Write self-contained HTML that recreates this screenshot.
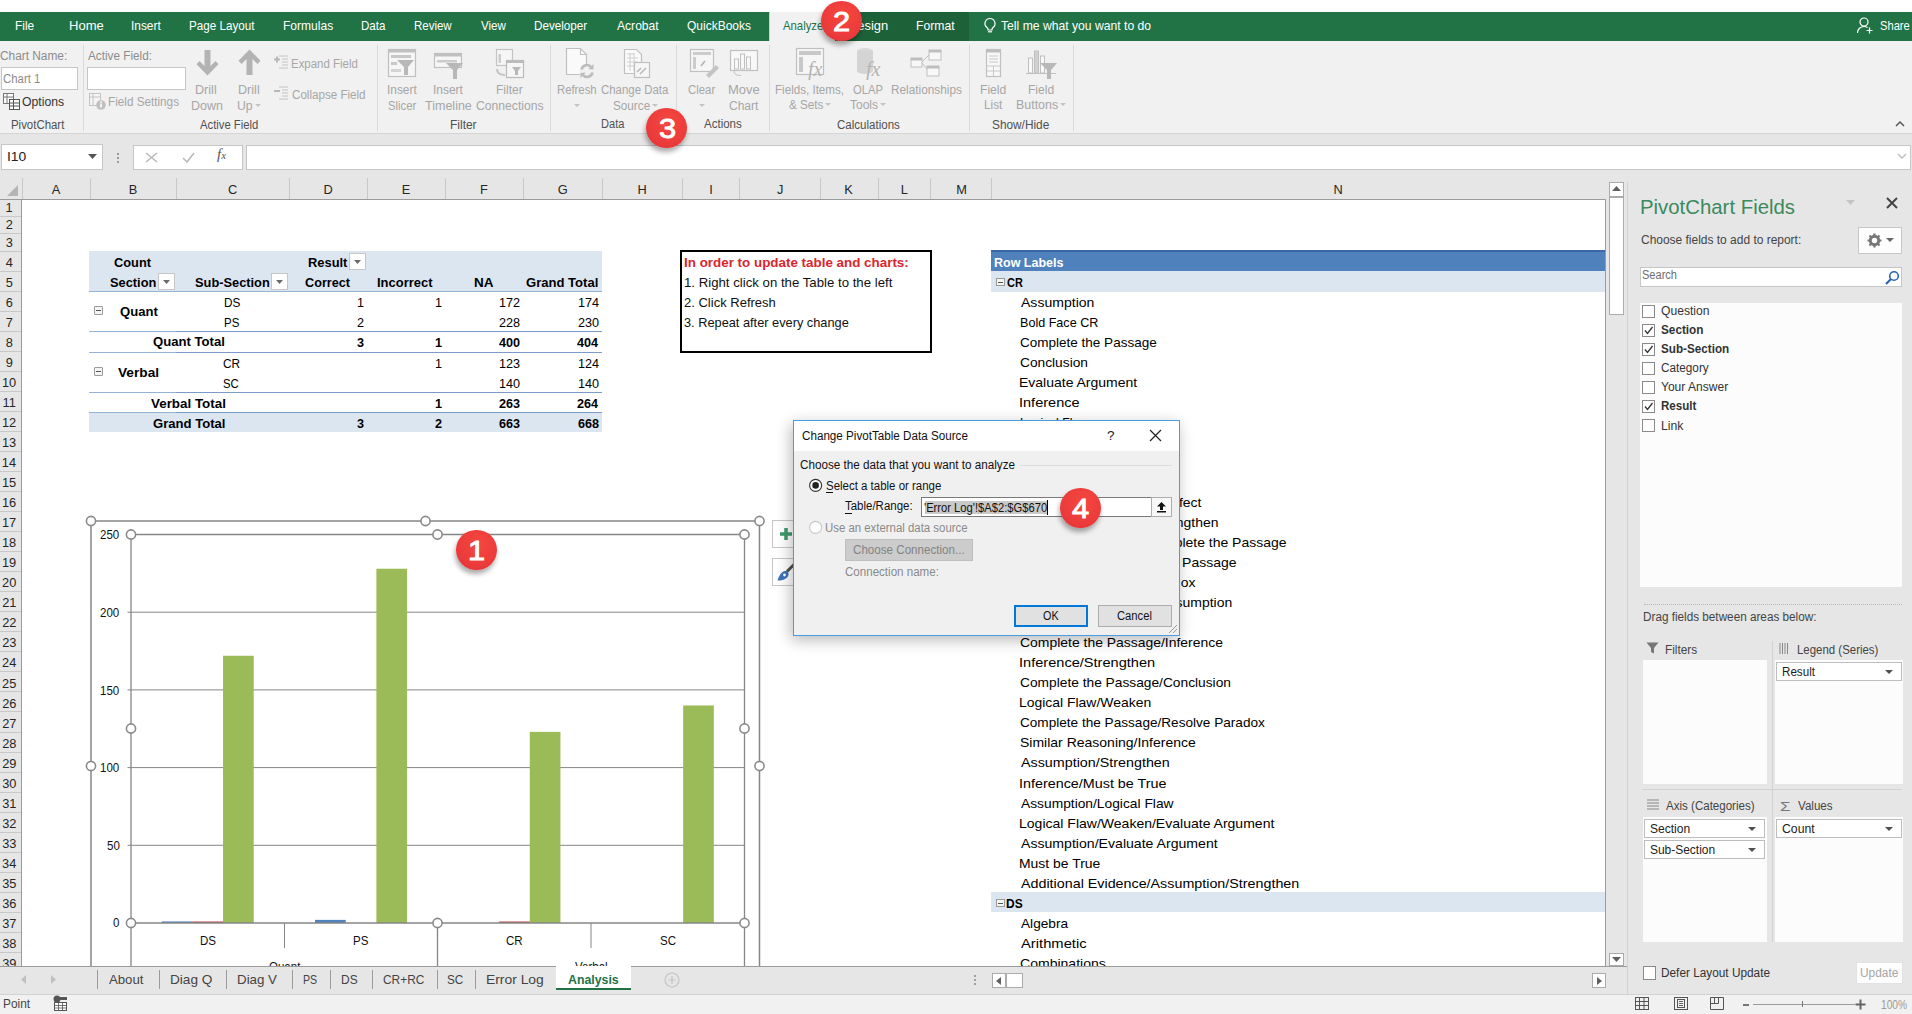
<!DOCTYPE html><html><head><meta charset="utf-8"><style>
html,body{margin:0;padding:0;background:#fff;}
#root{position:relative;width:1912px;height:1014px;overflow:hidden;background:#fff;font-family:"Liberation Sans",sans-serif;}
#root div{position:absolute;box-sizing:border-box;}
.t{position:absolute;white-space:nowrap;line-height:1;transform-origin:0 0;font-family:"Liberation Sans",sans-serif;}
</style></head><body><div id="root">
<div style="left:0.00px;top:12.00px;width:1912.00px;height:29.00px;background:#217346;"></div>
<div style="left:769.00px;top:12.00px;width:200.00px;height:29.00px;background:#1d6139;"></div>
<div style="left:769.00px;top:12.00px;width:66.00px;height:29.00px;background:#f1f1f1;border-left:1px solid #d0d0d0;"></div>
<div style="left:0.00px;top:41.00px;width:1912.00px;height:93.00px;background:#f1f1f1;border-bottom:1px solid #d5d5d5;"></div>
<div style="left:0.00px;top:134.00px;width:1912.00px;height:46.00px;background:#e6e6e6;"></div>
<div style="left:1.00px;top:144.00px;width:102.00px;height:26.00px;background:#fff;border:1px solid #c6c6c6;"></div>
<div style="left:133.00px;top:145.00px;width:110.00px;height:25.00px;background:#fff;border:1px solid #c6c6c6;"></div>
<div style="left:246.00px;top:145.00px;width:1665.00px;height:25.00px;background:#fff;border:1px solid #c6c6c6;"></div>
<div style="left:0.00px;top:180.00px;width:1605.00px;height:20.00px;background:#e6e6e6;border-bottom:1px solid #9b9b9b;"></div>
<div style="left:0.00px;top:200.00px;width:22.00px;height:766.00px;background:#e6e6e6;border-right:1px solid #9b9b9b;"></div>
<div style="left:22.00px;top:200.00px;width:1583.00px;height:766.00px;background:#fff;"></div>
<div style="left:1605.00px;top:180.00px;width:23.00px;height:786.00px;background:#e6e6e6;"></div>
<div style="left:1605.00px;top:199.00px;width:1.00px;height:767.00px;background:#9b9b9b;"></div>
<div style="left:1628.00px;top:170.00px;width:284.00px;height:824.00px;background:#e6e6e6;"></div>
<div style="left:1627.00px;top:182.00px;width:1.00px;height:812.00px;background:#d2d2d2;"></div>
<div style="left:0.00px;top:966.00px;width:1627.00px;height:28.00px;background:#e6e6e6;border-top:1px solid #9b9b9b;"></div>
<div style="left:0.00px;top:994.00px;width:1912.00px;height:20.00px;background:#f1f1f1;border-top:1px solid #d2d2d2;"></div>
<span class="t" style="left:15.26px;top:20.35px;font-size:12.7px;color:#ffffff;transform:scaleX(0.9368);">File</span>
<span class="t" style="left:68.97px;top:20.35px;font-size:12.7px;color:#ffffff;transform:scaleX(1.0286);">Home</span>
<span class="t" style="left:130.95px;top:20.35px;font-size:12.7px;color:#ffffff;transform:scaleX(0.9366);">Insert</span>
<span class="t" style="left:189.08px;top:20.35px;font-size:12.7px;color:#ffffff;transform:scaleX(0.9204);">Page Layout</span>
<span class="t" style="left:283.05px;top:20.35px;font-size:12.7px;color:#ffffff;transform:scaleX(0.9492);">Formulas</span>
<span class="t" style="left:361.09px;top:20.35px;font-size:12.7px;color:#ffffff;transform:scaleX(0.9115);">Data</span>
<span class="t" style="left:414.09px;top:20.35px;font-size:12.7px;color:#ffffff;transform:scaleX(0.9052);">Review</span>
<span class="t" style="left:480.89px;top:20.35px;font-size:12.7px;color:#ffffff;transform:scaleX(0.9132);">View</span>
<span class="t" style="left:534.48px;top:20.35px;font-size:12.7px;color:#ffffff;transform:scaleX(0.9196);">Developer</span>
<span class="t" style="left:617.00px;top:20.35px;font-size:12.7px;color:#ffffff;transform:scaleX(0.9527);">Acrobat</span>
<span class="t" style="left:687.21px;top:20.35px;font-size:12.7px;color:#ffffff;transform:scaleX(0.9450);">QuickBooks</span>
<span class="t" style="left:847.98px;top:20.35px;font-size:12.7px;color:#ffffff;transform:scaleX(1.0191);">Design</span>
<span class="t" style="left:916.24px;top:20.35px;font-size:12.7px;color:#ffffff;transform:scaleX(0.9600);">Format</span>
<span class="t" style="left:1001.16px;top:20.35px;font-size:12.7px;color:#ffffff;transform:scaleX(0.9590);">Tell me what you want to do</span>
<span class="t" style="left:1879.65px;top:20.35px;font-size:12.7px;color:#ffffff;transform:scaleX(0.8794);">Share</span>
<span class="t" style="left:782.50px;top:20.35px;font-size:12.7px;color:#217346;transform:scaleX(0.8939);">Analyze</span>
<svg style="position:absolute;left:982px;top:17px;" width="16" height="17" viewBox="0 0 16 17"><path d="M8 1.5a5 5 0 0 0-3 9c.6.5 1 1.2 1 2V13h4v-.5c0-.8.4-1.5 1-2a5 5 0 0 0-3-9z" fill="none" stroke="#fff" stroke-width="1.2"/><path d="M6 14.8h4" stroke="#fff" stroke-width="1.2"/></svg>
<svg style="position:absolute;left:1856px;top:16px;" width="18" height="18" viewBox="0 0 18 18"><circle cx="8" cy="6" r="4" fill="none" stroke="#fff" stroke-width="1.2"/><path d="M1.5 17c0-4 3-6.5 6.5-6.5 1.5 0 2.6.4 3.5 1" fill="none" stroke="#fff" stroke-width="1.2"/><path d="M13.5 11.5v6M10.5 14.5h6" stroke="#fff" stroke-width="1.2"/></svg>
<div style="left:82.50px;top:45.00px;width:1.00px;height:86.00px;background:#dadada;"></div>
<div style="left:376.50px;top:45.00px;width:1.00px;height:86.00px;background:#dadada;"></div>
<div style="left:550.30px;top:45.00px;width:1.00px;height:86.00px;background:#dadada;"></div>
<div style="left:676.30px;top:45.00px;width:1.00px;height:86.00px;background:#dadada;"></div>
<div style="left:769.30px;top:45.00px;width:1.00px;height:86.00px;background:#dadada;"></div>
<div style="left:968.50px;top:45.00px;width:1.00px;height:86.00px;background:#dadada;"></div>
<div style="left:1073.00px;top:45.00px;width:1.00px;height:86.00px;background:#dadada;"></div>
<span class="t" style="left:0.01px;top:49.92px;font-size:12.5px;color:#8c8c8c;transform:scaleX(0.9490);">Chart Name:</span>
<div style="left:1.00px;top:67.00px;width:77.00px;height:23.00px;background:#fff;border:1px solid #c6c6c6;"></div>
<span class="t" style="left:3.03px;top:72.72px;font-size:12.5px;color:#8c8c8c;transform:scaleX(0.9107);">Chart 1</span>
<svg style="position:absolute;left:3px;top:93px;" width="17" height="17" viewBox="0 0 17 17"><rect x="0.5" y="0.5" width="10" height="10" fill="#fff" stroke="#777"/><path d="M0.5 4h10M4 0.5v10" stroke="#777"/><rect x="6.5" y="6.5" width="10" height="10" fill="#fff" stroke="#555"/><path d="M6.5 10h10M10.5 6.5v10M6.5 13h10" stroke="#555"/></svg>
<span class="t" style="left:21.89px;top:95.62px;font-size:12.5px;color:#333333;transform:scaleX(0.9786);">Options</span>
<span class="t" style="left:11.39px;top:118.52px;font-size:12.5px;color:#505050;transform:scaleX(0.9135);">PivotChart</span>
<span class="t" style="left:87.50px;top:49.92px;font-size:12.5px;color:#8c8c8c;transform:scaleX(0.9403);">Active Field:</span>
<div style="left:87.00px;top:67.00px;width:99.00px;height:23.00px;background:#fff;border:1px solid #c6c6c6;"></div>
<svg style="position:absolute;left:89px;top:93px;" width="17" height="17" viewBox="0 0 17 17"><rect x="0.5" y="0.5" width="11" height="12" fill="#f4f4f4" stroke="#c4c4c4"/><path d="M0.5 4h11M4 0.5v12" stroke="#c4c4c4"/><circle cx="12" cy="12" r="4.8" fill="#c0c0c0"/><rect x="11.2" y="10.5" width="1.6" height="4" fill="#fff"/><rect x="11.2" y="8.3" width="1.6" height="1.5" fill="#fff"/></svg>
<span class="t" style="left:108.36px;top:95.62px;font-size:12.5px;color:#a6a6a6;transform:scaleX(0.9374);">Field Settings</span>
<svg style="position:absolute;left:196px;top:49px;" width="23" height="28" viewBox="0 0 23 28"><path d="M8.5 1h6v16l5-5 3 3.2L11.5 26.5 0.5 15.2 3.5 12l5 5z" fill="#b3b3b3"/></svg>
<svg style="position:absolute;left:238px;top:48px;" width="23" height="28" viewBox="0 0 23 28"><path d="M8.5 27h6V11l5 5 3-3.2L11.5 1.5 0.5 12.8 3.5 16l5-5z" fill="#b3b3b3"/></svg>
<span class="t" style="left:195.49px;top:83.62px;font-size:12.5px;color:#a6a6a6;transform:scaleX(1.0076);">Drill</span>
<span class="t" style="left:190.50px;top:99.62px;font-size:12.5px;color:#a6a6a6;transform:scaleX(0.9959);">Down</span>
<span class="t" style="left:237.59px;top:83.62px;font-size:12.5px;color:#a6a6a6;transform:scaleX(1.0076);">Drill</span>
<span class="t" style="left:236.52px;top:99.62px;font-size:12.5px;color:#a6a6a6;transform:scaleX(0.9793);">Up</span>
<svg style="position:absolute;left:273px;top:55px;" width="16" height="15" viewBox="0 0 16 15"><path d="M4 1.5v6M1 4.5h6" stroke="#b8b8b8" stroke-width="2"/><path d="M6 1h9M9 4h6M9 7h6M9 10h6M6 13h9" stroke="#c4c4c4" stroke-width="1"/></svg>
<svg style="position:absolute;left:273px;top:86px;" width="16" height="15" viewBox="0 0 16 15"><path d="M1 5h6" stroke="#b8b8b8" stroke-width="2"/><path d="M6 1h9M9 4h6M9 7h6M9 10h6M6 13h9" stroke="#c4c4c4" stroke-width="1"/></svg>
<span class="t" style="left:291.48px;top:57.72px;font-size:12.5px;color:#a6a6a6;transform:scaleX(0.9153);">Expand Field</span>
<span class="t" style="left:291.82px;top:88.62px;font-size:12.5px;color:#a6a6a6;transform:scaleX(0.9286);">Collapse Field</span>
<span class="t" style="left:200.40px;top:118.52px;font-size:12.5px;color:#505050;transform:scaleX(0.9020);">Active Field</span>
<svg style="position:absolute;left:387px;top:48px;" width="30" height="30" viewBox="0 0 30 30"><rect x="1.5" y="1.5" width="27" height="27" fill="#f6f6f6" stroke="#c0c0c0" stroke-width="1.2"/><rect x="1.5" y="1.5" width="27" height="3" fill="#c0c0c0"/><rect x="4" y="7" width="20" height="3" fill="#c8c8c8"/><path d="M10 12h17l-6 7v8h-4v-8z" fill="#b8b8b8"/><rect x="4" y="14" width="6" height="3" fill="#c8c8c8"/><rect x="4" y="21" width="10" height="3" fill="#d4d4d4"/></svg>
<svg style="position:absolute;left:433px;top:52px;" width="32" height="28" viewBox="0 0 32 28"><rect x="1.5" y="1.5" width="27" height="14" fill="#f6f6f6" stroke="#c0c0c0" stroke-width="1.2"/><rect x="1.5" y="1.5" width="27" height="3" fill="#c0c0c0"/><rect x="4" y="8" width="20" height="2.5" fill="#cccccc"/><path d="M13 11h17l-6 7v9h-4v-9z" fill="#b8b8b8"/></svg>
<svg style="position:absolute;left:495px;top:48px;" width="31" height="31" viewBox="0 0 31 31"><rect x="1.5" y="1.5" width="16" height="16" fill="#f6f6f6" stroke="#c4c4c4" stroke-width="1.2"/><rect x="3.5" y="6" width="2.5" height="9" fill="#cccccc"/><rect x="11.5" y="12.5" width="17" height="17" fill="#f6f6f6" stroke="#bbbbbb" stroke-width="1.2"/><rect x="11.5" y="12.5" width="17" height="2.5" fill="#bbb"/><path d="M17 19h9l-3 4v4h-3v-4z" fill="#b8b8b8"/><path d="M2 21c0 4 3 6 8 6" fill="none" stroke="#c4c4c4" stroke-width="2"/></svg>
<span class="t" style="left:386.53px;top:83.72px;font-size:12.5px;color:#a6a6a6;transform:scaleX(0.9500);">Insert</span>
<span class="t" style="left:387.83px;top:99.72px;font-size:12.5px;color:#a6a6a6;transform:scaleX(0.9049);">Slicer</span>
<span class="t" style="left:433.12px;top:83.72px;font-size:12.5px;color:#a6a6a6;transform:scaleX(0.9567);">Insert</span>
<span class="t" style="left:425.05px;top:99.72px;font-size:12.5px;color:#a6a6a6;">Timeline</span>
<span class="t" style="left:496.44px;top:83.72px;font-size:12.5px;color:#a6a6a6;transform:scaleX(0.9615);">Filter</span>
<span class="t" style="left:475.79px;top:99.72px;font-size:12.5px;color:#a6a6a6;transform:scaleX(0.9726);">Connections</span>
<span class="t" style="left:449.54px;top:118.52px;font-size:12.5px;color:#505050;transform:scaleX(0.9577);">Filter</span>
<svg style="position:absolute;left:565px;top:47px;" width="30" height="33" viewBox="0 0 30 33"><path d="M1.5 1.5h14l6 6V27.5h-20z" fill="#fafafa" stroke="#c0c0c0" stroke-width="1.2"/><path d="M15.5 1.5v6h6" fill="none" stroke="#c0c0c0" stroke-width="1.2"/><circle cx="22" cy="24" r="7.5" fill="#f1f1f1"/><path d="M16.5 22.5a5.5 5.5 0 0 1 9.8-2.3" fill="none" stroke="#bcbcbc" stroke-width="2.6"/><path d="M28.5 17v5.2h-5.2z" fill="#bcbcbc"/><path d="M27.5 25.5a5.5 5.5 0 0 1-9.8 2.3" fill="none" stroke="#bcbcbc" stroke-width="2.6"/><path d="M15.5 31v-5.2h5.2z" fill="#bcbcbc"/></svg>
<svg style="position:absolute;left:623px;top:48px;" width="30" height="32" viewBox="0 0 30 32"><path d="M1.5 1.5h12l5 5V25.5h-17z" fill="#fafafa" stroke="#c0c0c0" stroke-width="1.2"/><path d="M4 6h8M4 10h11M4 14h11M4 18h11M7 5v18M11 5v18" stroke="#d0d0d0"/><rect x="11.5" y="14.5" width="15" height="15" fill="#f6f6f6" stroke="#c0c0c0" stroke-width="1.2"/><path d="M14 24l4-4M17 26l6-6" stroke="#b8b8b8" stroke-width="1.5"/></svg>
<span class="t" style="left:556.60px;top:83.52px;font-size:12.5px;color:#a6a6a6;transform:scaleX(0.9048);">Refresh</span>
<span class="t" style="left:601.13px;top:83.52px;font-size:12.5px;color:#a6a6a6;transform:scaleX(0.9135);">Change Data</span>
<span class="t" style="left:612.61px;top:99.52px;font-size:12.5px;color:#a6a6a6;transform:scaleX(0.9381);">Source</span>
<span class="t" style="left:600.81px;top:118.42px;font-size:12.5px;color:#505050;transform:scaleX(0.8863);">Data</span>
<svg style="position:absolute;left:689px;top:48px;" width="31" height="31" viewBox="0 0 31 31"><rect x="1.5" y="1.5" width="23" height="22" fill="#f6f6f6" stroke="#c0c0c0" stroke-width="1.2"/><rect x="4" y="4" width="18" height="3" fill="#cccccc"/><rect x="4" y="9" width="3" height="12" fill="#cccccc"/><path d="M12 18l4-5" stroke="#b0b0b0" stroke-width="1.5"/><path d="M17 27l10-10 3 3-10 10z" fill="#c4c4c4"/></svg>
<svg style="position:absolute;left:729px;top:49px;" width="30" height="28" viewBox="0 0 30 28"><rect x="1.5" y="1.5" width="27" height="20" fill="#f8f8f8" stroke="#c0c0c0" stroke-width="1.2"/><rect x="5.5" y="10" width="4" height="10" fill="#f8f8f8" stroke="#c0c0c0"/><rect x="11.5" y="5" width="4" height="15" fill="#f8f8f8" stroke="#c0c0c0"/><rect x="17.5" y="8" width="4" height="12" fill="#f8f8f8" stroke="#c0c0c0"/><path d="M5 21.5c0 4 3 5 7 5" fill="none" stroke="#c0c0c0"/></svg>
<span class="t" style="left:687.73px;top:83.52px;font-size:12.5px;color:#a6a6a6;transform:scaleX(0.9099);">Clear</span>
<span class="t" style="left:728.16px;top:83.52px;font-size:12.5px;color:#a6a6a6;transform:scaleX(1.0379);">Move</span>
<span class="t" style="left:728.60px;top:99.52px;font-size:12.5px;color:#a6a6a6;transform:scaleX(0.9607);">Chart</span>
<span class="t" style="left:704.00px;top:118.42px;font-size:12.5px;color:#505050;transform:scaleX(0.9210);">Actions</span>
<svg style="position:absolute;left:795px;top:47px;" width="33" height="33" viewBox="0 0 33 33"><rect x="1.5" y="1.5" width="27" height="26" fill="#f6f6f6" stroke="#c0c0c0" stroke-width="1.2"/><rect x="4" y="4" width="22" height="4" fill="#c8c8c8"/><rect x="4" y="10" width="4" height="15" fill="#c8c8c8"/><text x="13" y="29" font-family="Liberation Serif" font-style="italic" font-size="20" fill="#b4b4b4">fx</text></svg>
<svg style="position:absolute;left:855px;top:47px;" width="30" height="33" viewBox="0 0 30 33"><ellipse cx="10" cy="4" rx="8" ry="3" fill="#d8d8d8"/><rect x="2" y="4" width="16" height="20" fill="#d4d4d4"/><ellipse cx="10" cy="24" rx="8" ry="3" fill="#d4d4d4"/><text x="11" y="29" font-family="Liberation Serif" font-style="italic" font-size="20" fill="#b4b4b4">fx</text></svg>
<svg style="position:absolute;left:910px;top:49px;" width="32" height="29" viewBox="0 0 32 29"><rect x="1" y="9" width="11" height="9" fill="#f8f8f8" stroke="#c0c0c0"/><rect x="1" y="9" width="11" height="2.5" fill="#bdbdbd"/><rect x="19" y="1" width="12" height="10" fill="#f8f8f8" stroke="#c0c0c0"/><rect x="19" y="1" width="12" height="2.5" fill="#bdbdbd"/><rect x="17" y="17" width="12" height="10" fill="#f8f8f8" stroke="#c0c0c0"/><rect x="17" y="17" width="12" height="2.5" fill="#bdbdbd"/><path d="M12 13l7-7M12 14l5 6" stroke="#c0c0c0"/></svg>
<span class="t" style="left:775.27px;top:83.52px;font-size:12.5px;color:#a6a6a6;transform:scaleX(0.9287);">Fields, Items,</span>
<span class="t" style="left:789.05px;top:99.22px;font-size:12.5px;color:#a6a6a6;transform:scaleX(0.9333);">&amp; Sets</span>
<span class="t" style="left:852.94px;top:83.52px;font-size:12.5px;color:#a6a6a6;transform:scaleX(0.8965);">OLAP</span>
<span class="t" style="left:850.46px;top:99.22px;font-size:12.5px;color:#a6a6a6;transform:scaleX(0.9586);">Tools</span>
<span class="t" style="left:890.55px;top:83.52px;font-size:12.5px;color:#a6a6a6;transform:scaleX(0.9456);">Relationships</span>
<span class="t" style="left:836.92px;top:119.02px;font-size:12.5px;color:#505050;transform:scaleX(0.9224);">Calculations</span>
<svg style="position:absolute;left:985px;top:48px;" width="17" height="30" viewBox="0 0 17 30"><rect x="1.5" y="1.5" width="14" height="27" fill="#f8f8f8" stroke="#c0c0c0" stroke-width="1.2"/><rect x="1.5" y="1.5" width="14" height="3" fill="#bdbdbd"/><path d="M4 8h9M4 11h9M4 14h9M1.5 18h14M1.5 23h14M8.5 18v10" stroke="#c8c8c8"/></svg>
<svg style="position:absolute;left:1026px;top:50px;" width="33" height="31" viewBox="0 0 33 31"><rect x="2.5" y="8" width="4" height="15" fill="#f8f8f8" stroke="#c0c0c0"/><rect x="8.5" y="1" width="4" height="22" fill="#d0d0d0" stroke="#c0c0c0"/><rect x="14.5" y="6" width="4" height="17" fill="#f8f8f8" stroke="#c0c0c0"/><path d="M0 23.5h30" stroke="#c0c0c0"/><path d="M14 13h17l-6 7v9h-4v-9z" fill="#b8b8b8"/></svg>
<span class="t" style="left:980.03px;top:83.52px;font-size:12.5px;color:#a6a6a6;transform:scaleX(0.9703);">Field</span>
<span class="t" style="left:984.46px;top:99.22px;font-size:12.5px;color:#a6a6a6;transform:scaleX(0.9415);">List</span>
<span class="t" style="left:1028.04px;top:83.52px;font-size:12.5px;color:#a6a6a6;transform:scaleX(0.9624);">Field</span>
<span class="t" style="left:1016.41px;top:99.22px;font-size:12.5px;color:#a6a6a6;transform:scaleX(0.9933);">Buttons</span>
<span class="t" style="left:991.71px;top:119.02px;font-size:12.5px;color:#505050;transform:scaleX(0.9468);">Show/Hide</span>
<svg style="position:absolute;left:254.5px;top:103.7px;" width="7" height="4" viewBox="0 0 7 4"><path d="M0 0h6l-3 3z" fill="#c4c4c4"/></svg>
<svg style="position:absolute;left:573.5px;top:103.6px;" width="7" height="4" viewBox="0 0 7 4"><path d="M0 0h6l-3 3z" fill="#c4c4c4"/></svg>
<svg style="position:absolute;left:651.7px;top:103.5px;" width="7" height="4" viewBox="0 0 7 4"><path d="M0 0h6l-3 3z" fill="#c4c4c4"/></svg>
<svg style="position:absolute;left:698.6px;top:103.6px;" width="7" height="4" viewBox="0 0 7 4"><path d="M0 0h6l-3 3z" fill="#c4c4c4"/></svg>
<svg style="position:absolute;left:825.4px;top:103.2px;" width="7" height="4" viewBox="0 0 7 4"><path d="M0 0h6l-3 3z" fill="#c4c4c4"/></svg>
<svg style="position:absolute;left:880.3px;top:103.2px;" width="7" height="4" viewBox="0 0 7 4"><path d="M0 0h6l-3 3z" fill="#c4c4c4"/></svg>
<svg style="position:absolute;left:1060px;top:103.2px;" width="7" height="4" viewBox="0 0 7 4"><path d="M0 0h6l-3 3z" fill="#c4c4c4"/></svg>
<svg style="position:absolute;left:1895px;top:120px;" width="10" height="7" viewBox="0 0 10 7"><path d="M1 6l4-4 4 4" fill="none" stroke="#555" stroke-width="1.5"/></svg>
<span class="t" style="left:7.08px;top:151.46px;font-size:12.8px;color:#222;transform:scaleX(1.0853);">I10</span>
<svg style="position:absolute;left:88px;top:154px;" width="9" height="5" viewBox="0 0 9 5"><path d="M0 0h9l-4.5 5z" fill="#555"/></svg>
<div style="left:117.00px;top:153.00px;width:2.00px;height:2.00px;background:#9a9a9a;"></div>
<div style="left:117.00px;top:157.00px;width:2.00px;height:2.00px;background:#9a9a9a;"></div>
<div style="left:117.00px;top:161.00px;width:2.00px;height:2.00px;background:#9a9a9a;"></div>
<svg style="position:absolute;left:145px;top:152px;" width="13" height="11" viewBox="0 0 13 11"><path d="M1 1l11 9M12 1L1 10" stroke="#b8b8b8" stroke-width="1.5"/></svg>
<svg style="position:absolute;left:182px;top:152px;" width="13" height="11" viewBox="0 0 13 11"><path d="M1 6l4 4 7-9" fill="none" stroke="#b8b8b8" stroke-width="1.5"/></svg>
<span class="t" style="left:217px;top:147px;font-size:15px;font-family:'Liberation Serif',serif;font-style:italic;color:#555;">f<span style="font-size:11px">x</span></span>
<svg style="position:absolute;left:1897px;top:153px;" width="10" height="7" viewBox="0 0 10 7"><path d="M1 1l4 4 4-4" fill="none" stroke="#c0c0c0" stroke-width="1.5"/></svg>
<div style="left:0;top:0;width:1912px;height:966px;overflow:hidden;">
<span class="t" style="left:51.80px;top:183.56px;font-size:12.8px;color:#262626;">A</span>
<span class="t" style="left:128.71px;top:183.56px;font-size:12.8px;color:#262626;">B</span>
<span class="t" style="left:228.01px;top:183.56px;font-size:12.8px;color:#262626;">C</span>
<span class="t" style="left:323.54px;top:183.56px;font-size:12.8px;color:#262626;">D</span>
<span class="t" style="left:401.85px;top:183.56px;font-size:12.8px;color:#262626;">E</span>
<span class="t" style="left:480.08px;top:183.56px;font-size:12.8px;color:#262626;">F</span>
<span class="t" style="left:557.84px;top:183.56px;font-size:12.8px;color:#262626;">G</span>
<span class="t" style="left:637.59px;top:183.56px;font-size:12.8px;color:#262626;">H</span>
<span class="t" style="left:709.25px;top:183.56px;font-size:12.8px;color:#262626;">I</span>
<span class="t" style="left:777.02px;top:183.56px;font-size:12.8px;color:#262626;">J</span>
<span class="t" style="left:844.31px;top:183.56px;font-size:12.8px;color:#262626;">K</span>
<span class="t" style="left:900.69px;top:183.56px;font-size:12.8px;color:#262626;">L</span>
<span class="t" style="left:956.14px;top:183.56px;font-size:12.8px;color:#262626;">M</span>
<span class="t" style="left:1333.44px;top:183.56px;font-size:12.8px;color:#262626;">N</span>
<div style="left:22.00px;top:178.00px;width:1.00px;height:21.00px;background:#c8c8c8;"></div>
<div style="left:90.00px;top:178.00px;width:1.00px;height:21.00px;background:#c8c8c8;"></div>
<div style="left:176.00px;top:178.00px;width:1.00px;height:21.00px;background:#c8c8c8;"></div>
<div style="left:289.00px;top:178.00px;width:1.00px;height:21.00px;background:#c8c8c8;"></div>
<div style="left:367.00px;top:178.00px;width:1.00px;height:21.00px;background:#c8c8c8;"></div>
<div style="left:445.00px;top:178.00px;width:1.00px;height:21.00px;background:#c8c8c8;"></div>
<div style="left:523.00px;top:178.00px;width:1.00px;height:21.00px;background:#c8c8c8;"></div>
<div style="left:602.00px;top:178.00px;width:1.00px;height:21.00px;background:#c8c8c8;"></div>
<div style="left:682.00px;top:178.00px;width:1.00px;height:21.00px;background:#c8c8c8;"></div>
<div style="left:739.00px;top:178.00px;width:1.00px;height:21.00px;background:#c8c8c8;"></div>
<div style="left:820.00px;top:178.00px;width:1.00px;height:21.00px;background:#c8c8c8;"></div>
<div style="left:878.00px;top:178.00px;width:1.00px;height:21.00px;background:#c8c8c8;"></div>
<div style="left:930.00px;top:178.00px;width:1.00px;height:21.00px;background:#c8c8c8;"></div>
<div style="left:991.00px;top:178.00px;width:1.00px;height:21.00px;background:#c8c8c8;"></div>
<svg style="position:absolute;left:5px;top:184px;" width="14" height="13" viewBox="0 0 14 13"><path d="M13 1v11H2z" fill="#b4b4b4"/></svg>
<div style="left:0.00px;top:216.00px;width:21.00px;height:1.00px;background:#c8c8c8;"></div>
<span class="t" style="left:5.55px;top:202.06px;font-size:12.8px;color:#262626;">1</span>
<div style="left:0.00px;top:233.00px;width:21.00px;height:1.00px;background:#c8c8c8;"></div>
<span class="t" style="left:5.74px;top:219.06px;font-size:12.8px;color:#262626;">2</span>
<div style="left:0.00px;top:251.00px;width:21.00px;height:1.00px;background:#c8c8c8;"></div>
<span class="t" style="left:5.80px;top:236.86px;font-size:12.8px;color:#262626;">3</span>
<div style="left:0.00px;top:271.00px;width:21.00px;height:1.00px;background:#c8c8c8;"></div>
<span class="t" style="left:5.80px;top:256.89px;font-size:12.8px;color:#262626;">4</span>
<div style="left:0.00px;top:291.00px;width:21.00px;height:1.00px;background:#c8c8c8;"></div>
<span class="t" style="left:5.74px;top:276.92px;font-size:12.8px;color:#262626;">5</span>
<div style="left:0.00px;top:311.00px;width:21.00px;height:1.00px;background:#c8c8c8;"></div>
<span class="t" style="left:5.74px;top:296.95px;font-size:12.8px;color:#262626;">6</span>
<div style="left:0.00px;top:331.00px;width:21.00px;height:1.00px;background:#c8c8c8;"></div>
<span class="t" style="left:5.74px;top:316.98px;font-size:12.8px;color:#262626;">7</span>
<div style="left:0.00px;top:351.00px;width:21.00px;height:1.00px;background:#c8c8c8;"></div>
<span class="t" style="left:5.80px;top:337.01px;font-size:12.8px;color:#262626;">8</span>
<div style="left:0.00px;top:371.00px;width:21.00px;height:1.00px;background:#c8c8c8;"></div>
<span class="t" style="left:5.74px;top:357.04px;font-size:12.8px;color:#262626;">9</span>
<div style="left:0.00px;top:391.00px;width:21.00px;height:1.00px;background:#c8c8c8;"></div>
<span class="t" style="left:1.93px;top:377.07px;font-size:12.8px;color:#262626;">10</span>
<div style="left:0.00px;top:411.00px;width:21.00px;height:1.00px;background:#c8c8c8;"></div>
<span class="t" style="left:2.49px;top:397.10px;font-size:12.8px;color:#262626;">11</span>
<div style="left:0.00px;top:431.00px;width:21.00px;height:1.00px;background:#c8c8c8;"></div>
<span class="t" style="left:1.99px;top:417.13px;font-size:12.8px;color:#262626;">12</span>
<div style="left:0.00px;top:451.00px;width:21.00px;height:1.00px;background:#c8c8c8;"></div>
<span class="t" style="left:1.99px;top:437.16px;font-size:12.8px;color:#262626;">13</span>
<div style="left:0.00px;top:471.00px;width:21.00px;height:1.00px;background:#c8c8c8;"></div>
<span class="t" style="left:1.86px;top:457.19px;font-size:12.8px;color:#262626;">14</span>
<div style="left:0.00px;top:491.00px;width:21.00px;height:1.00px;background:#c8c8c8;"></div>
<span class="t" style="left:1.93px;top:477.22px;font-size:12.8px;color:#262626;">15</span>
<div style="left:0.00px;top:511.00px;width:21.00px;height:1.00px;background:#c8c8c8;"></div>
<span class="t" style="left:1.99px;top:497.25px;font-size:12.8px;color:#262626;">16</span>
<div style="left:0.00px;top:531.00px;width:21.00px;height:1.00px;background:#c8c8c8;"></div>
<span class="t" style="left:1.99px;top:517.28px;font-size:12.8px;color:#262626;">17</span>
<div style="left:0.00px;top:551.00px;width:21.00px;height:1.00px;background:#c8c8c8;"></div>
<span class="t" style="left:1.99px;top:537.31px;font-size:12.8px;color:#262626;">18</span>
<div style="left:0.00px;top:571.00px;width:21.00px;height:1.00px;background:#c8c8c8;"></div>
<span class="t" style="left:1.99px;top:557.34px;font-size:12.8px;color:#262626;">19</span>
<div style="left:0.00px;top:591.00px;width:21.00px;height:1.00px;background:#c8c8c8;"></div>
<span class="t" style="left:2.11px;top:577.37px;font-size:12.8px;color:#262626;">20</span>
<div style="left:0.00px;top:611.00px;width:21.00px;height:1.00px;background:#c8c8c8;"></div>
<span class="t" style="left:2.18px;top:597.40px;font-size:12.8px;color:#262626;">21</span>
<div style="left:0.00px;top:631.00px;width:21.00px;height:1.00px;background:#c8c8c8;"></div>
<span class="t" style="left:2.18px;top:617.43px;font-size:12.8px;color:#262626;">22</span>
<div style="left:0.00px;top:651.00px;width:21.00px;height:1.00px;background:#c8c8c8;"></div>
<span class="t" style="left:2.18px;top:637.46px;font-size:12.8px;color:#262626;">23</span>
<div style="left:0.00px;top:671.00px;width:21.00px;height:1.00px;background:#c8c8c8;"></div>
<span class="t" style="left:2.05px;top:657.49px;font-size:12.8px;color:#262626;">24</span>
<div style="left:0.00px;top:691.00px;width:21.00px;height:1.00px;background:#c8c8c8;"></div>
<span class="t" style="left:2.11px;top:677.52px;font-size:12.8px;color:#262626;">25</span>
<div style="left:0.00px;top:711.00px;width:21.00px;height:1.00px;background:#c8c8c8;"></div>
<span class="t" style="left:2.18px;top:697.55px;font-size:12.8px;color:#262626;">26</span>
<div style="left:0.00px;top:732.00px;width:21.00px;height:1.00px;background:#c8c8c8;"></div>
<span class="t" style="left:2.18px;top:717.58px;font-size:12.8px;color:#262626;">27</span>
<div style="left:0.00px;top:752.00px;width:21.00px;height:1.00px;background:#c8c8c8;"></div>
<span class="t" style="left:2.18px;top:737.61px;font-size:12.8px;color:#262626;">28</span>
<div style="left:0.00px;top:772.00px;width:21.00px;height:1.00px;background:#c8c8c8;"></div>
<span class="t" style="left:2.18px;top:757.64px;font-size:12.8px;color:#262626;">29</span>
<div style="left:0.00px;top:792.00px;width:21.00px;height:1.00px;background:#c8c8c8;"></div>
<span class="t" style="left:2.18px;top:777.67px;font-size:12.8px;color:#262626;">30</span>
<div style="left:0.00px;top:812.00px;width:21.00px;height:1.00px;background:#c8c8c8;"></div>
<span class="t" style="left:2.24px;top:797.70px;font-size:12.8px;color:#262626;">31</span>
<div style="left:0.00px;top:832.00px;width:21.00px;height:1.00px;background:#c8c8c8;"></div>
<span class="t" style="left:2.24px;top:817.73px;font-size:12.8px;color:#262626;">32</span>
<div style="left:0.00px;top:852.00px;width:21.00px;height:1.00px;background:#c8c8c8;"></div>
<span class="t" style="left:2.24px;top:837.76px;font-size:12.8px;color:#262626;">33</span>
<div style="left:0.00px;top:872.00px;width:21.00px;height:1.00px;background:#c8c8c8;"></div>
<span class="t" style="left:2.11px;top:857.79px;font-size:12.8px;color:#262626;">34</span>
<div style="left:0.00px;top:892.00px;width:21.00px;height:1.00px;background:#c8c8c8;"></div>
<span class="t" style="left:2.18px;top:877.82px;font-size:12.8px;color:#262626;">35</span>
<div style="left:0.00px;top:912.00px;width:21.00px;height:1.00px;background:#c8c8c8;"></div>
<span class="t" style="left:2.24px;top:897.85px;font-size:12.8px;color:#262626;">36</span>
<div style="left:0.00px;top:932.00px;width:21.00px;height:1.00px;background:#c8c8c8;"></div>
<span class="t" style="left:2.24px;top:917.88px;font-size:12.8px;color:#262626;">37</span>
<div style="left:0.00px;top:952.00px;width:21.00px;height:1.00px;background:#c8c8c8;"></div>
<span class="t" style="left:2.24px;top:937.91px;font-size:12.8px;color:#262626;">38</span>
<span class="t" style="left:2.24px;top:957.91px;font-size:12.8px;color:#262626;">39</span>
<div style="left:89.00px;top:251.00px;width:513.00px;height:40.00px;background:#dce6f1;"></div>
<div style="left:89.00px;top:291.00px;width:513.00px;height:1.00px;background:#95b3d7;"></div>
<div style="left:89.00px;top:331.00px;width:513.00px;height:1.00px;background:#95b3d7;"></div>
<div style="left:176.00px;top:331.00px;width:426.00px;height:1.00px;background:#7a9cc6;"></div>
<div style="left:89.00px;top:352.00px;width:513.00px;height:1.00px;background:#95b3d7;"></div>
<div style="left:176.00px;top:352.00px;width:426.00px;height:1.00px;background:#7a9cc6;"></div>
<div style="left:89.00px;top:392.00px;width:513.00px;height:1.00px;background:#95b3d7;"></div>
<div style="left:176.00px;top:392.00px;width:426.00px;height:1.00px;background:#7a9cc6;"></div>
<div style="left:89.00px;top:412.00px;width:513.00px;height:1.00px;background:#95b3d7;"></div>
<div style="left:176.00px;top:412.00px;width:426.00px;height:1.00px;background:#7a9cc6;"></div>
<div style="left:89.00px;top:413.00px;width:513.00px;height:19.00px;background:#dce6f1;"></div>
<span class="t" style="left:113.83px;top:255.89px;font-size:13.6px;font-weight:bold;color:#000;transform:scaleX(0.9424);">Count</span>
<span class="t" style="left:307.57px;top:255.89px;font-size:13.6px;font-weight:bold;color:#000;transform:scaleX(0.9477);">Result</span>
<span class="t" style="left:109.85px;top:275.69px;font-size:13.6px;font-weight:bold;color:#000;transform:scaleX(0.9437);">Section</span>
<span class="t" style="left:194.55px;top:275.69px;font-size:13.6px;font-weight:bold;color:#000;transform:scaleX(0.9431);">Sub-Section</span>
<span class="t" style="left:304.93px;top:275.89px;font-size:13.6px;font-weight:bold;color:#000;transform:scaleX(0.9319);">Correct</span>
<span class="t" style="left:377.37px;top:275.89px;font-size:13.6px;font-weight:bold;color:#000;transform:scaleX(0.9537);">Incorrect</span>
<span class="t" style="left:473.53px;top:275.89px;font-size:13.6px;font-weight:bold;color:#000;transform:scaleX(0.9946);">NA</span>
<span class="t" style="left:526.02px;top:275.89px;font-size:13.6px;font-weight:bold;color:#000;transform:scaleX(0.9608);">Grand Total</span>
<div style="left:158.00px;top:273.00px;width:17.00px;height:17.00px;background:#fff;border:1px solid #c6c6c6;"></div>
<svg style="position:absolute;left:163px;top:280px;" width="8" height="5" viewBox="0 0 8 5"><path d="M0 0h7l-3.5 4z" fill="#6a6a6a"/></svg>
<div style="left:271.00px;top:273.00px;width:17.00px;height:17.00px;background:#fff;border:1px solid #c6c6c6;"></div>
<svg style="position:absolute;left:276px;top:280px;" width="8" height="5" viewBox="0 0 8 5"><path d="M0 0h7l-3.5 4z" fill="#6a6a6a"/></svg>
<div style="left:349.00px;top:253.00px;width:17.00px;height:17.00px;background:#fff;border:1px solid #c6c6c6;"></div>
<svg style="position:absolute;left:354px;top:260px;" width="8" height="5" viewBox="0 0 8 5"><path d="M0 0h7l-3.5 4z" fill="#6a6a6a"/></svg>
<div style="left:94.00px;top:306.00px;width:9.00px;height:9.00px;background:#f4f4f4;border:1px solid #9a9a9a;border-radius:1px;"></div>
<div style="left:96.00px;top:310.00px;width:5.00px;height:1.00px;background:#555;"></div>
<div style="left:94.00px;top:367.00px;width:9.00px;height:9.00px;background:#f4f4f4;border:1px solid #9a9a9a;border-radius:1px;"></div>
<div style="left:96.00px;top:371.00px;width:5.00px;height:1.00px;background:#555;"></div>
<span class="t" style="left:120.02px;top:304.79px;font-size:13.6px;font-weight:bold;color:#000;transform:scaleX(0.9626);">Quant</span>
<span class="t" style="left:223.53px;top:295.59px;font-size:13.6px;color:#000;transform:scaleX(0.8638);">DS</span>
<span class="t" style="left:223.55px;top:315.69px;font-size:13.6px;color:#000;transform:scaleX(0.8424);">PS</span>
<span class="t" style="left:152.92px;top:335.39px;font-size:13.6px;font-weight:bold;color:#000;transform:scaleX(0.9652);">Quant Total</span>
<span class="t" style="left:118.17px;top:365.99px;font-size:13.6px;font-weight:bold;color:#000;transform:scaleX(1.0056);">Verbal</span>
<span class="t" style="left:223.46px;top:356.79px;font-size:13.6px;color:#000;transform:scaleX(0.8707);">CR</span>
<span class="t" style="left:223.48px;top:377.09px;font-size:13.6px;color:#000;transform:scaleX(0.8338);">SC</span>
<span class="t" style="left:151.38px;top:396.99px;font-size:13.6px;font-weight:bold;color:#000;transform:scaleX(0.9850);">Verbal Total</span>
<span class="t" style="left:153.02px;top:417.29px;font-size:13.6px;font-weight:bold;color:#000;transform:scaleX(0.9622);">Grand Total</span>
<span class="t" style="left:357.21px;top:296.09px;font-size:13.6px;color:#000;transform:scaleX(0.9300);">1</span>
<span class="t" style="left:435.11px;top:296.09px;font-size:13.6px;color:#000;transform:scaleX(0.9300);">1</span>
<span class="t" style="left:499.14px;top:296.09px;font-size:13.6px;color:#000;transform:scaleX(0.9300);">172</span>
<span class="t" style="left:577.69px;top:296.09px;font-size:13.6px;color:#000;transform:scaleX(0.9300);">174</span>
<span class="t" style="left:357.21px;top:315.79px;font-size:13.6px;color:#000;transform:scaleX(0.9300);">2</span>
<span class="t" style="left:499.02px;top:315.79px;font-size:13.6px;color:#000;transform:scaleX(0.9300);">228</span>
<span class="t" style="left:577.92px;top:315.79px;font-size:13.6px;color:#000;transform:scaleX(0.9300);">230</span>
<span class="t" style="left:356.97px;top:335.89px;font-size:13.6px;font-weight:bold;color:#000;transform:scaleX(0.9300);">3</span>
<span class="t" style="left:434.76px;top:335.89px;font-size:13.6px;font-weight:bold;color:#000;transform:scaleX(0.9300);">1</span>
<span class="t" style="left:499.02px;top:335.89px;font-size:13.6px;font-weight:bold;color:#000;transform:scaleX(0.9300);">400</span>
<span class="t" style="left:577.46px;top:335.89px;font-size:13.6px;font-weight:bold;color:#000;transform:scaleX(0.9300);">404</span>
<span class="t" style="left:435.11px;top:356.79px;font-size:13.6px;color:#000;transform:scaleX(0.9300);">1</span>
<span class="t" style="left:499.02px;top:356.79px;font-size:13.6px;color:#000;transform:scaleX(0.9300);">123</span>
<span class="t" style="left:577.69px;top:356.79px;font-size:13.6px;color:#000;transform:scaleX(0.9300);">124</span>
<span class="t" style="left:499.02px;top:377.09px;font-size:13.6px;color:#000;transform:scaleX(0.9300);">140</span>
<span class="t" style="left:577.92px;top:377.09px;font-size:13.6px;color:#000;transform:scaleX(0.9300);">140</span>
<span class="t" style="left:434.76px;top:396.99px;font-size:13.6px;font-weight:bold;color:#000;transform:scaleX(0.9300);">1</span>
<span class="t" style="left:498.91px;top:396.99px;font-size:13.6px;font-weight:bold;color:#000;transform:scaleX(0.9300);">263</span>
<span class="t" style="left:577.46px;top:396.99px;font-size:13.6px;font-weight:bold;color:#000;transform:scaleX(0.9300);">264</span>
<span class="t" style="left:356.97px;top:417.29px;font-size:13.6px;font-weight:bold;color:#000;transform:scaleX(0.9300);">3</span>
<span class="t" style="left:434.99px;top:417.29px;font-size:13.6px;font-weight:bold;color:#000;transform:scaleX(0.9300);">2</span>
<span class="t" style="left:498.91px;top:417.29px;font-size:13.6px;font-weight:bold;color:#000;transform:scaleX(0.9300);">663</span>
<span class="t" style="left:577.81px;top:417.29px;font-size:13.6px;font-weight:bold;color:#000;transform:scaleX(0.9300);">668</span>
<div style="left:680.00px;top:250.00px;width:252.00px;height:103.00px;border:2px solid #000;background:#fff;"></div>
<span class="t" style="left:683.64px;top:255.99px;font-size:13.6px;font-weight:bold;color:#d9262c;transform:scaleX(0.9854);">In order to update table and charts:</span>
<span class="t" style="left:683.53px;top:275.99px;font-size:13.6px;color:#111;transform:scaleX(0.9721);">1. Right click on the Table to the left</span>
<span class="t" style="left:683.90px;top:295.79px;font-size:13.6px;color:#111;transform:scaleX(0.9573);">2. Click Refresh</span>
<span class="t" style="left:684.03px;top:315.99px;font-size:13.6px;color:#111;transform:scaleX(0.9397);">3. Repeat after every change</span>
<div style="left:991.00px;top:251.00px;width:614.00px;height:20.00px;background:#4f81bd;"></div>
<div style="left:991.00px;top:250.00px;width:614.00px;height:1.50px;background:#3b68a3;"></div>
<span class="t" style="left:993.80px;top:255.79px;font-size:13.6px;font-weight:bold;color:#ffffff;transform:scaleX(0.9199);">Row Labels</span>
<div style="left:991.00px;top:271.00px;width:614.00px;height:21.00px;background:#dce6f1;"></div>
<div style="left:991.00px;top:892.00px;width:614.00px;height:20.00px;background:#dce6f1;"></div>
<div style="left:996.00px;top:278.00px;width:9.00px;height:8.00px;background:#f4f4f4;border:1px solid #9a9a9a;"></div>
<div style="left:998.00px;top:281.50px;width:5.00px;height:1.00px;background:#555;"></div>
<div style="left:996.00px;top:899.00px;width:9.00px;height:8.00px;background:#f4f4f4;border:1px solid #9a9a9a;"></div>
<div style="left:998.00px;top:902.50px;width:5.00px;height:1.00px;background:#555;"></div>
<span class="t" style="left:1007.10px;top:275.69px;font-size:13.6px;font-weight:bold;color:#000;transform:scaleX(0.8053);">CR</span>
<span class="t" style="left:1006.43px;top:896.59px;font-size:13.6px;font-weight:bold;color:#000;transform:scaleX(0.8794);">DS</span>
<span class="t" style="left:1020.60px;top:295.79px;font-size:13.6px;color:#000;transform:scaleX(1.0330);">Assumption</span>
<span class="t" style="left:1019.56px;top:315.82px;font-size:13.6px;color:#000;transform:scaleX(0.9253);">Bold Face CR</span>
<span class="t" style="left:1019.98px;top:335.85px;font-size:13.6px;color:#000;transform:scaleX(0.9940);">Complete the Passage</span>
<span class="t" style="left:1019.97px;top:355.88px;font-size:13.6px;color:#000;transform:scaleX(1.0106);">Conclusion</span>
<span class="t" style="left:1019.44px;top:375.91px;font-size:13.6px;color:#000;transform:scaleX(1.0289);">Evaluate Argument</span>
<span class="t" style="left:1019.26px;top:395.94px;font-size:13.6px;color:#000;transform:scaleX(1.0691);">Inference</span>
<span class="t" style="left:1019.59px;top:415.97px;font-size:13.6px;color:#000;transform:scaleX(0.9000);">Logical Flaw</span>
<span class="t" style="left:1019.96px;top:636.30px;font-size:13.6px;color:#000;transform:scaleX(1.0251);">Complete the Passage/Inference</span>
<span class="t" style="left:1019.26px;top:656.33px;font-size:13.6px;color:#000;transform:scaleX(1.0725);">Inference/Strengthen</span>
<span class="t" style="left:1019.97px;top:676.36px;font-size:13.6px;color:#000;transform:scaleX(1.0114);">Complete the Passage/Conclusion</span>
<span class="t" style="left:1019.45px;top:696.39px;font-size:13.6px;color:#000;transform:scaleX(1.0248);">Logical Flaw/Weaken</span>
<span class="t" style="left:1019.98px;top:716.42px;font-size:13.6px;color:#000;">Complete the Passage/Resolve Paradox</span>
<span class="t" style="left:1019.96px;top:736.45px;font-size:13.6px;color:#000;transform:scaleX(1.0294);">Similar Reasoning/Inference</span>
<span class="t" style="left:1020.60px;top:756.48px;font-size:13.6px;color:#000;transform:scaleX(1.0529);">Assumption/Strengthen</span>
<span class="t" style="left:1019.28px;top:776.51px;font-size:13.6px;color:#000;transform:scaleX(1.0553);">Inference/Must be True</span>
<span class="t" style="left:1020.60px;top:796.54px;font-size:13.6px;color:#000;transform:scaleX(1.0143);">Assumption/Logical Flaw</span>
<span class="t" style="left:1019.44px;top:816.57px;font-size:13.6px;color:#000;transform:scaleX(1.0312);">Logical Flaw/Weaken/Evaluate Argument</span>
<span class="t" style="left:1020.60px;top:836.60px;font-size:13.6px;color:#000;transform:scaleX(1.0372);">Assumption/Evaluate Argument</span>
<span class="t" style="left:1019.45px;top:856.63px;font-size:13.6px;color:#000;transform:scaleX(1.0247);">Must be True</span>
<span class="t" style="left:1020.60px;top:876.66px;font-size:13.6px;color:#000;transform:scaleX(1.0520);">Additional Evidence/Assumption/Strengthen</span>
<span class="t" style="left:1020.60px;top:916.72px;font-size:13.6px;color:#000;transform:scaleX(1.0043);">Algebra</span>
<span class="t" style="left:1020.60px;top:936.75px;font-size:13.6px;color:#000;transform:scaleX(1.0855);">Arithmetic</span>
<span class="t" style="left:1019.95px;top:956.78px;font-size:13.6px;color:#000;transform:scaleX(1.0322);">Combinations</span>
<span class="t" style="left:1012.94px;top:496.09px;font-size:13.6px;color:#000;transform:scaleX(1.0278);">Logical Flaw/Cause and Effect</span>
<span class="t" style="left:1088.41px;top:516.12px;font-size:13.6px;color:#000;transform:scaleX(1.0278);">Inference/Strengthen</span>
<span class="t" style="left:1082.82px;top:536.15px;font-size:13.6px;color:#000;transform:scaleX(1.0278);">Inference/Complete the Passage</span>
<span class="t" style="left:1032.92px;top:556.18px;font-size:13.6px;color:#000;transform:scaleX(1.0278);">Inference/Complete the Passage</span>
<span class="t" style="left:1088.89px;top:576.21px;font-size:13.6px;color:#000;transform:scaleX(1.0278);">Resolve Paradox</span>
<span class="t" style="left:1086.63px;top:596.24px;font-size:13.6px;color:#000;transform:scaleX(1.0278);">Strengthen/Assumption</span>
</div>
<div style="left:1609.00px;top:182.00px;width:15.00px;height:15.00px;background:#fff;border:1px solid #ababab;"></div>
<svg style="position:absolute;left:1612px;top:186px;" width="9" height="6" viewBox="0 0 9 6"><path d="M0 5h9L4.5 0z" fill="#606060"/></svg>
<div style="left:1609.00px;top:197.00px;width:15.00px;height:118.00px;background:#fff;border:1px solid #ababab;"></div>
<div style="left:1609.00px;top:953.00px;width:15.00px;height:13.00px;background:#fff;border:1px solid #ababab;"></div>
<svg style="position:absolute;left:1612px;top:957px;" width="9" height="6" viewBox="0 0 9 6"><path d="M0 0h9L4.5 5z" fill="#606060"/></svg>
<div style="left:991.00px;top:973.00px;width:615.00px;height:15.00px;background:#e6e6e6;"></div>
<div style="left:992.00px;top:973.00px;width:14.00px;height:15.00px;background:#fff;border:1px solid #ababab;"></div>
<svg style="position:absolute;left:996px;top:977px;" width="6" height="8" viewBox="0 0 6 8"><path d="M5 0v8L0 4z" fill="#606060"/></svg>
<div style="left:1006.00px;top:973.00px;width:17.00px;height:15.00px;background:#fff;border:1px solid #ababab;"></div>
<div style="left:1592.00px;top:973.00px;width:14.00px;height:15.00px;background:#fff;border:1px solid #ababab;"></div>
<svg style="position:absolute;left:1597px;top:977px;" width="6" height="8" viewBox="0 0 6 8"><path d="M0 0v8L5 4z" fill="#606060"/></svg>
<svg style="position:absolute;left:21px;top:975px;" width="6" height="9" viewBox="0 0 6 9"><path d="M5 0v9L0 4.5z" fill="#c0c0c0"/></svg>
<svg style="position:absolute;left:51px;top:975px;" width="6" height="9" viewBox="0 0 6 9"><path d="M0 0v9L5 4.5z" fill="#c0c0c0"/></svg>
<div style="left:97.00px;top:970.00px;width:1.00px;height:19.00px;background:#9b9b9b;"></div>
<div style="left:159.00px;top:970.00px;width:1.00px;height:19.00px;background:#9b9b9b;"></div>
<div style="left:226.00px;top:970.00px;width:1.00px;height:19.00px;background:#9b9b9b;"></div>
<div style="left:292.00px;top:970.00px;width:1.00px;height:19.00px;background:#9b9b9b;"></div>
<div style="left:330.00px;top:970.00px;width:1.00px;height:19.00px;background:#9b9b9b;"></div>
<div style="left:372.00px;top:970.00px;width:1.00px;height:19.00px;background:#9b9b9b;"></div>
<div style="left:437.00px;top:970.00px;width:1.00px;height:19.00px;background:#9b9b9b;"></div>
<div style="left:475.00px;top:970.00px;width:1.00px;height:19.00px;background:#9b9b9b;"></div>
<div style="left:556.00px;top:966.00px;width:75.00px;height:24.00px;background:#ffffff;"></div>
<div style="left:556.00px;top:988.00px;width:75.00px;height:2.00px;background:#217346;"></div>
<span class="t" style="left:109.30px;top:973.65px;font-size:12.7px;color:#444;transform:scaleX(1.0376);">About</span>
<span class="t" style="left:170.03px;top:973.65px;font-size:12.7px;color:#444;transform:scaleX(1.0728);">Diag Q</span>
<span class="t" style="left:236.95px;top:973.65px;font-size:12.7px;color:#444;transform:scaleX(1.0505);">Diag V</span>
<span class="t" style="left:302.66px;top:973.65px;font-size:12.7px;color:#444;transform:scaleX(0.8390);">PS</span>
<span class="t" style="left:341.36px;top:973.65px;font-size:12.7px;color:#444;transform:scaleX(0.9426);">DS</span>
<span class="t" style="left:382.81px;top:973.65px;font-size:12.7px;color:#444;transform:scaleX(0.9387);">CR+RC</span>
<span class="t" style="left:447.22px;top:973.65px;font-size:12.7px;color:#444;transform:scaleX(0.9263);">SC</span>
<span class="t" style="left:485.91px;top:973.65px;font-size:12.7px;color:#444;transform:scaleX(1.0927);">Error Log</span>
<span class="t" style="left:568.34px;top:973.65px;font-size:12.7px;font-weight:bold;color:#217346;transform:scaleX(0.9705);">Analysis</span>
<svg style="position:absolute;left:664px;top:972px;" width="16" height="16" viewBox="0 0 16 16"><circle cx="8" cy="8" r="7" fill="none" stroke="#c4c4c4" stroke-width="1.2"/><path d="M8 4v8M4 8h8" stroke="#c4c4c4" stroke-width="1.2"/></svg>
<div style="left:974.00px;top:975.00px;width:2.00px;height:2.00px;background:#a0a0a0;"></div>
<div style="left:974.00px;top:979.00px;width:2.00px;height:2.00px;background:#a0a0a0;"></div>
<div style="left:974.00px;top:983.00px;width:2.00px;height:2.00px;background:#a0a0a0;"></div>
<span class="t" style="left:3.45px;top:998.02px;font-size:12.5px;color:#444;transform:scaleX(0.9498);">Point</span>
<svg style="position:absolute;left:53px;top:995px;" width="15" height="16" viewBox="0 0 15 16"><circle cx="4" cy="4" r="3.5" fill="#555"/><rect x="6" y="2" width="8" height="3" fill="#555"/><rect x="1.5" y="7.5" width="12" height="8" fill="#fff" stroke="#555"/><path d="M1.5 10.5h12M1.5 13h12M5.5 7.5v8M9.5 7.5v8" stroke="#555" stroke-width="0.8"/></svg>
<svg style="position:absolute;left:1635px;top:997px;" width="15" height="14" viewBox="0 0 15 14"><rect x="0.5" y="0.5" width="13" height="12" fill="none" stroke="#555"/><path d="M0.5 4.5h13M0.5 8.5h13M4.5 0.5v12M9 0.5v12" stroke="#555"/></svg>
<svg style="position:absolute;left:1674px;top:997px;" width="15" height="14" viewBox="0 0 15 14"><rect x="0.5" y="0.5" width="13" height="12" fill="none" stroke="#555"/><rect x="3.5" y="2.5" width="7" height="8" fill="none" stroke="#555"/><path d="M5 4.5h4M5 6.5h4M5 8.5h4" stroke="#666"/></svg>
<svg style="position:absolute;left:1710px;top:997px;" width="16" height="14" viewBox="0 0 16 14"><path d="M0.5 0.5h13v12H0.5z" fill="none" stroke="#555"/><path d="M0.5 6.5h8v-6M4.5 0.5v6" fill="none" stroke="#555"/></svg>
<div style="left:1743.00px;top:1004.00px;width:6.00px;height:2.00px;background:#777;"></div>
<div style="left:1753.00px;top:1004.00px;width:102.00px;height:1.00px;background:#9b9b9b;"></div>
<div style="left:1802.00px;top:1001.00px;width:1.00px;height:6.00px;background:#777;"></div>
<svg style="position:absolute;left:1855px;top:999px;" width="11" height="11" viewBox="0 0 11 11"><path d="M5.5 0.5v10M0.5 5.5h10" stroke="#666" stroke-width="2"/></svg>
<span class="t" style="left:1881.26px;top:998.94px;font-size:12px;color:#9a9a9a;transform:scaleX(0.8511);">100%</span>
<div style="left:0;top:0;width:1912px;height:966px;overflow:hidden;">
<div style="left:91.00px;top:521.00px;width:669.00px;height:445.00px;background:#fff;"></div>
<svg style="position:absolute;left:0;top:0" width="1912" height="1014" viewBox="0 0 1912 1014"><path d="M127.5 612.2H744.5" stroke="#868686" stroke-width="1"/><path d="M127.5 689.9H744.5" stroke="#868686" stroke-width="1"/><path d="M127.5 767.6H744.5" stroke="#868686" stroke-width="1"/><path d="M127.5 845.3H744.5" stroke="#868686" stroke-width="1"/><path d="M131 534.5H744.5" stroke="#868686" stroke-width="1.3"/><path d="M131 534.5V966M744.5 534.5V966M437.5 923V966" stroke="#868686" stroke-width="1.3"/><path d="M284.5 923V948M591 923V948" stroke="#868686" stroke-width="1"/><path d="M91 966V521H759.5V966" fill="none" stroke="#868686" stroke-width="1.5"/><rect x="161.68" y="921.45" width="30.68" height="1.55" fill="#4f81bd"/><rect x="192.35" y="921.45" width="30.68" height="1.55" fill="#c0504d"/><rect x="223.03" y="655.75" width="30.68" height="267.25" fill="#9bbb59"/><rect x="315.05" y="919.89" width="30.68" height="3.11" fill="#4f81bd"/><rect x="376.40" y="568.73" width="30.68" height="354.27" fill="#9bbb59"/><rect x="499.10" y="921.45" width="30.68" height="1.55" fill="#c0504d"/><rect x="529.77" y="731.88" width="30.68" height="191.12" fill="#9bbb59"/><rect x="683.15" y="705.47" width="30.68" height="217.53" fill="#9bbb59"/><path d="M127.5 923H744.5" stroke="#868686" stroke-width="1.6"/><circle cx="91" cy="521" r="4.6" fill="#fff" stroke="#8a8a8a" stroke-width="1.6"/><circle cx="425.5" cy="521" r="4.6" fill="#fff" stroke="#8a8a8a" stroke-width="1.6"/><circle cx="759.5" cy="521" r="4.6" fill="#fff" stroke="#8a8a8a" stroke-width="1.6"/><circle cx="91" cy="766" r="4.6" fill="#fff" stroke="#8a8a8a" stroke-width="1.6"/><circle cx="759.5" cy="766" r="4.6" fill="#fff" stroke="#8a8a8a" stroke-width="1.6"/><circle cx="131" cy="534.5" r="4.6" fill="#fff" stroke="#8a8a8a" stroke-width="1.6"/><circle cx="437.5" cy="534.5" r="4.6" fill="#fff" stroke="#8a8a8a" stroke-width="1.6"/><circle cx="744.5" cy="534.5" r="4.6" fill="#fff" stroke="#8a8a8a" stroke-width="1.6"/><circle cx="131" cy="728.5" r="4.6" fill="#fff" stroke="#8a8a8a" stroke-width="1.6"/><circle cx="744.5" cy="728.5" r="4.6" fill="#fff" stroke="#8a8a8a" stroke-width="1.6"/><circle cx="131" cy="923" r="4.6" fill="#fff" stroke="#8a8a8a" stroke-width="1.6"/><circle cx="437.5" cy="923" r="4.6" fill="#fff" stroke="#8a8a8a" stroke-width="1.6"/><circle cx="744.5" cy="923" r="4.6" fill="#fff" stroke="#8a8a8a" stroke-width="1.6"/></svg>
<span class="t" style="left:100.18px;top:529.00px;font-size:12.4px;color:#111;transform:scaleX(0.9300);">250</span>
<span class="t" style="left:100.18px;top:606.80px;font-size:12.4px;color:#111;transform:scaleX(0.9300);">200</span>
<span class="t" style="left:100.18px;top:684.50px;font-size:12.4px;color:#111;transform:scaleX(0.9300);">150</span>
<span class="t" style="left:100.18px;top:762.10px;font-size:12.4px;color:#111;transform:scaleX(0.9300);">100</span>
<span class="t" style="left:106.58px;top:839.60px;font-size:12.4px;color:#111;transform:scaleX(0.9300);">50</span>
<span class="t" style="left:112.97px;top:917.40px;font-size:12.4px;color:#111;transform:scaleX(0.9300);">0</span>
<span class="t" style="left:199.55px;top:934.80px;font-size:12.4px;color:#111;transform:scaleX(0.9300);">DS</span>
<span class="t" style="left:353.29px;top:934.80px;font-size:12.4px;color:#111;transform:scaleX(0.9300);">PS</span>
<span class="t" style="left:506.23px;top:934.80px;font-size:12.4px;color:#111;transform:scaleX(0.9300);">CR</span>
<span class="t" style="left:659.98px;top:934.80px;font-size:12.4px;color:#111;transform:scaleX(0.9300);">SC</span>
<span class="t" style="left:268.57px;top:960.60px;font-size:12.4px;color:#111;transform:scaleX(0.9300);">Quant</span>
<span class="t" style="left:575.02px;top:960.60px;font-size:12.4px;color:#111;transform:scaleX(0.9300);">Verbal</span>
</div>
<div style="left:772.00px;top:520.00px;width:28.00px;height:28.00px;background:#fff;border:1px solid #c6c6c6;"></div>
<svg style="position:absolute;left:778px;top:526px;" width="16" height="16" viewBox="0 0 16 16"><path d="M8 2v12M2 8h12" stroke="#3f9a6b" stroke-width="3.5"/></svg>
<div style="left:772.00px;top:558.00px;width:28.00px;height:28.00px;background:#fff;border:1px solid #c6c6c6;"></div>
<svg style="position:absolute;left:776px;top:554px;" width="22" height="30" viewBox="0 0 22 30"><path d="M1.5 26.5c1.5-5 4-9 7.5-9.5 2.5-.3 4 1.5 3.5 4-.8 3.5-5 5.5-11 5.5z" fill="#3b72b8"/><circle cx="8.5" cy="21" r="1.4" fill="#fff"/><path d="M11 17.5l9-9" stroke="#505050" stroke-width="3"/></svg>
<div style="left:793.00px;top:420.00px;width:387.00px;height:216.00px;background:#f0f0f0;border:1px solid #4a9be0;box-shadow:-2px 4px 14px rgba(0,0,0,0.28);"></div>
<div style="left:794.00px;top:421.00px;width:385.00px;height:30.00px;background:#ffffff;"></div>
<span class="t" style="left:801.92px;top:429.92px;font-size:12.5px;color:#111;transform:scaleX(0.9325);">Change PivotTable Data Source</span>
<span class="t" style="left:1107.46px;top:430.02px;font-size:12.5px;color:#222;transform:scaleX(1.0833);">?</span>
<svg style="position:absolute;left:1149px;top:429px;" width="14" height="13" viewBox="0 0 14 13"><path d="M1 1l11 11M12 1L1 12" stroke="#222" stroke-width="1.2"/></svg>
<span class="t" style="left:800.02px;top:458.82px;font-size:12.5px;color:#111;transform:scaleX(0.9346);">Choose the data that you want to analyze</span>
<div style="left:1020.00px;top:464.50px;width:152.00px;height:1.00px;background:#dcdcdc;"></div>
<svg style="position:absolute;left:808px;top:478px;" width="16" height="16" viewBox="0 0 16 16"><circle cx="7.6" cy="7.4" r="6" fill="#fff" stroke="#333" stroke-width="1.1"/><circle cx="7.6" cy="7.4" r="3.3" fill="#222"/></svg>
<span class="t" style="left:825.63px;top:479.62px;font-size:12.5px;color:#111;transform:scaleX(0.9172);">Select a table or range</span>
<div style="left:826.00px;top:492.00px;width:7.00px;height:1.00px;background:#111;"></div>
<span class="t" style="left:844.87px;top:500.32px;font-size:12.5px;color:#111;transform:scaleX(0.9176);">Table/Range:</span>
<div style="left:845.00px;top:513.00px;width:7.00px;height:1.00px;background:#111;"></div>
<div style="left:921.00px;top:497.00px;width:251.00px;height:20.00px;background:#fff;border:1px solid #7a7a7a;"></div>
<div style="left:924.50px;top:501.00px;width:122.50px;height:12.50px;background:#c9c9c9;"></div>
<span class="t" style="left:924.34px;top:502.32px;font-size:12.5px;color:#111;transform:scaleX(0.8953);">&#x27;Error Log&#x27;!$A$2:$G$670</span>
<div style="left:1047.00px;top:500.00px;width:1.00px;height:15.00px;background:#000;"></div>
<div style="left:1151.00px;top:497.00px;width:21.00px;height:20.00px;background:#f8f8f8;border:1px solid #adadad;"></div>
<svg style="position:absolute;left:1155px;top:500px;" width="13" height="13" viewBox="0 0 13 13"><path d="M6.5 2L2 6.5h3V10h3V6.5h3z" fill="#111"/><rect x="2" y="11" width="9" height="1.5" fill="#111"/></svg>
<svg style="position:absolute;left:808px;top:520px;" width="16" height="16" viewBox="0 0 16 16"><circle cx="7.6" cy="7.4" r="6" fill="#fdfdfd" stroke="#c8c8c8" stroke-width="1.1"/></svg>
<span class="t" style="left:825.49px;top:521.62px;font-size:12.5px;color:#8a8a8a;transform:scaleX(0.9118);">Use an external data source</span>
<div style="left:845.00px;top:539.00px;width:128.00px;height:22.00px;background:#cccccc;border:1px solid #bfbfbf;"></div>
<span class="t" style="left:852.82px;top:544.02px;font-size:12.5px;color:#838383;transform:scaleX(0.9291);">Choose Connection...</span>
<span class="t" style="left:845.22px;top:565.72px;font-size:12.5px;color:#8a8a8a;transform:scaleX(0.9253);">Connection name:</span>
<div style="left:1014.00px;top:605.00px;width:74.00px;height:22.00px;background:#e1e1e1;border:2px solid #0078d7;"></div>
<span class="t" style="left:1042.76px;top:610.22px;font-size:12.5px;color:#111;transform:scaleX(0.8638);">OK</span>
<div style="left:1098.00px;top:605.00px;width:74.00px;height:22.00px;background:#e1e1e1;border:1px solid #adadad;"></div>
<span class="t" style="left:1117.44px;top:610.22px;font-size:12.5px;color:#111;transform:scaleX(0.8987);">Cancel</span>
<svg style="position:absolute;left:1166px;top:622px;" width="12" height="12" viewBox="0 0 12 12"><path d="M11 3L3 11M11 7L7 11" stroke="#9a9a9a" stroke-width="1"/></svg>
<span class="t" style="left:1640.29px;top:196.95px;font-size:20.5px;color:#3b8a5e;transform:scaleX(0.9932);">PivotChart Fields</span>
<svg style="position:absolute;left:1846px;top:200px;" width="9" height="6" viewBox="0 0 9 6"><path d="M0 0h9L4.5 5z" fill="#c4c4c4"/></svg>
<svg style="position:absolute;left:1886px;top:197px;" width="12" height="12" viewBox="0 0 12 12"><path d="M1 1l10 10M11 1L1 11" stroke="#444" stroke-width="2"/></svg>
<span class="t" style="left:1641.30px;top:234.42px;font-size:12.5px;color:#444;transform:scaleX(0.9569);">Choose fields to add to report:</span>
<div style="left:1858.00px;top:227.00px;width:44.00px;height:27.00px;background:#fdfdfd;border:1px solid #c6c6c6;"></div>
<svg style="position:absolute;left:1867px;top:233px;" width="15" height="15" viewBox="0 0 15 15"><circle cx="7.5" cy="7.5" r="4.2" fill="none" stroke="#777" stroke-width="3"/><path d="M7.5 0.5v3M7.5 11.5v3M0.5 7.5h3M11.5 7.5h3M2.5 2.5l2 2M10.5 10.5l2 2M2.5 12.5l2-2M10.5 4.5l2-2" stroke="#777" stroke-width="2.2"/></svg>
<svg style="position:absolute;left:1886px;top:238px;" width="9" height="5" viewBox="0 0 9 5"><path d="M0 0h8l-4 4z" fill="#666"/></svg>
<div style="left:1640.00px;top:267.00px;width:262.00px;height:20.00px;background:#fff;border:1px solid #c6c6c6;"></div>
<span class="t" style="left:1641.95px;top:269.42px;font-size:12.5px;color:#6d6d6d;transform:scaleX(0.8839);">Search</span>
<svg style="position:absolute;left:1885px;top:270px;" width="15" height="15" viewBox="0 0 15 15"><circle cx="9" cy="6" r="4.3" fill="none" stroke="#2a66b0" stroke-width="1.6"/><path d="M6 9l-5 5" stroke="#2a66b0" stroke-width="2.2"/></svg>
<div style="left:1640.00px;top:303.00px;width:262.00px;height:284.00px;background:#fcfcfc;"></div>
<div style="left:1642.00px;top:305.00px;width:13.00px;height:13.00px;background:#fff;border:1px solid #8a8a8a;"></div>
<span class="t" style="left:1660.99px;top:305.32px;font-size:12.5px;color:#333;transform:scaleX(0.9686);">Question</span>
<div style="left:1642.00px;top:324.00px;width:13.00px;height:13.00px;background:#fff;border:1px solid #8a8a8a;"></div>
<svg style="position:absolute;left:1643px;top:325px;" width="11" height="11" viewBox="0 0 11 11"><path d="M2 5.5l2.5 3L9.5 2" fill="none" stroke="#333" stroke-width="1.3"/></svg>
<span class="t" style="left:1661.25px;top:324.35px;font-size:12.5px;font-weight:bold;color:#333;transform:scaleX(0.9409);">Section</span>
<div style="left:1642.00px;top:343.00px;width:13.00px;height:13.00px;background:#fff;border:1px solid #8a8a8a;"></div>
<svg style="position:absolute;left:1643px;top:344px;" width="11" height="11" viewBox="0 0 11 11"><path d="M2 5.5l2.5 3L9.5 2" fill="none" stroke="#333" stroke-width="1.3"/></svg>
<span class="t" style="left:1661.25px;top:343.38px;font-size:12.5px;font-weight:bold;color:#333;transform:scaleX(0.9352);">Sub-Section</span>
<div style="left:1642.00px;top:362.00px;width:13.00px;height:13.00px;background:#fff;border:1px solid #8a8a8a;"></div>
<span class="t" style="left:1661.01px;top:362.41px;font-size:12.5px;color:#333;transform:scaleX(0.9397);">Category</span>
<div style="left:1642.00px;top:381.00px;width:13.00px;height:13.00px;background:#fff;border:1px solid #8a8a8a;"></div>
<span class="t" style="left:1661.36px;top:381.44px;font-size:12.5px;color:#333;transform:scaleX(0.9632);">Your Answer</span>
<div style="left:1642.00px;top:400.00px;width:13.00px;height:13.00px;background:#fff;border:1px solid #8a8a8a;"></div>
<svg style="position:absolute;left:1643px;top:401px;" width="11" height="11" viewBox="0 0 11 11"><path d="M2 5.5l2.5 3L9.5 2" fill="none" stroke="#333" stroke-width="1.3"/></svg>
<span class="t" style="left:1660.79px;top:400.47px;font-size:12.5px;font-weight:bold;color:#333;transform:scaleX(0.9239);">Result</span>
<div style="left:1642.00px;top:419.00px;width:13.00px;height:13.00px;background:#fff;border:1px solid #8a8a8a;"></div>
<span class="t" style="left:1660.62px;top:419.50px;font-size:12.5px;color:#333;transform:scaleX(0.9783);">Link</span>
<div style="left:1644px;top:604px;width:258px;height:1px;border-top:1px dotted #b8b8b8;"></div>
<span class="t" style="left:1643.16px;top:610.82px;font-size:12.5px;color:#444;transform:scaleX(0.9384);">Drag fields between areas below:</span>
<div style="left:1643.00px;top:660.00px;width:124.00px;height:124.00px;background:#fcfcfc;"></div>
<div style="left:1775.00px;top:660.00px;width:128.00px;height:124.00px;background:#fcfcfc;"></div>
<div style="left:1643.00px;top:817.00px;width:124.00px;height:125.00px;background:#fcfcfc;"></div>
<div style="left:1775.00px;top:817.00px;width:128.00px;height:125.00px;background:#fcfcfc;"></div>
<div style="left:1772.00px;top:641.00px;width:1.00px;height:301.00px;background:#d2d2d2;"></div>
<div style="left:1642.00px;top:789.00px;width:260.00px;height:1.00px;background:#d2d2d2;"></div>
<svg style="position:absolute;left:1646px;top:642px;" width="13" height="12" viewBox="0 0 13 12"><path d="M0.5 0.5h12L8 6v5.5L5 10V6z" fill="#777"/></svg>
<span class="t" style="left:1665.16px;top:643.52px;font-size:12.5px;color:#444;transform:scaleX(0.9446);">Filters</span>
<svg style="position:absolute;left:1779px;top:643px;" width="11" height="11" viewBox="0 0 11 11"><path d="M1 0v11M3.5 0v11M6 0v11M8.5 0v11" stroke="#888" stroke-width="1"/></svg>
<span class="t" style="left:1797.09px;top:643.52px;font-size:12.5px;color:#444;transform:scaleX(0.9148);">Legend (Series)</span>
<svg style="position:absolute;left:1647px;top:799px;" width="12" height="11" viewBox="0 0 12 11"><path d="M0 1h12M0 4h12M0 7h12M0 10h12" stroke="#888" stroke-width="1"/></svg>
<span class="t" style="left:1666.10px;top:800.02px;font-size:12.5px;color:#444;transform:scaleX(0.9240);">Axis (Categories)</span>
<span class="t" style="left:1780.18px;top:799.60px;font-size:13px;color:#777;transform:scaleX(1.3091);">Σ</span>
<span class="t" style="left:1797.88px;top:800.02px;font-size:12.5px;color:#444;transform:scaleX(0.9283);">Values</span>
<div style="left:1776.00px;top:662.00px;width:126.00px;height:19.00px;background:#fff;border:1px solid #bdbdbd;"></div>
<span class="t" style="left:1782.07px;top:665.62px;font-size:12.5px;color:#222;transform:scaleX(0.9309);">Result</span>
<svg style="position:absolute;left:1885px;top:669.5px;" width="8" height="5" viewBox="0 0 8 5"><path d="M0 0h8L4 4z" fill="#505050"/></svg>
<div style="left:1644.00px;top:819.00px;width:121.00px;height:19.00px;background:#fff;border:1px solid #bdbdbd;"></div>
<span class="t" style="left:1650.40px;top:822.62px;font-size:12.5px;color:#222;transform:scaleX(0.9640);">Section</span>
<svg style="position:absolute;left:1748px;top:826.5px;" width="8" height="5" viewBox="0 0 8 5"><path d="M0 0h8L4 4z" fill="#505050"/></svg>
<div style="left:1644.00px;top:840.00px;width:121.00px;height:19.00px;background:#fff;border:1px solid #bdbdbd;"></div>
<span class="t" style="left:1650.40px;top:843.62px;font-size:12.5px;color:#222;transform:scaleX(0.9561);">Sub-Section</span>
<svg style="position:absolute;left:1748px;top:847.5px;" width="8" height="5" viewBox="0 0 8 5"><path d="M0 0h8L4 4z" fill="#505050"/></svg>
<div style="left:1776.00px;top:819.00px;width:126.00px;height:19.00px;background:#fff;border:1px solid #bdbdbd;"></div>
<span class="t" style="left:1782.39px;top:822.62px;font-size:12.5px;color:#222;transform:scaleX(0.9808);">Count</span>
<svg style="position:absolute;left:1885px;top:826.5px;" width="8" height="5" viewBox="0 0 8 5"><path d="M0 0h8L4 4z" fill="#505050"/></svg>
<div style="left:1643.00px;top:966.00px;width:13.00px;height:14.00px;background:#fff;border:1px solid #8a8a8a;"></div>
<span class="t" style="left:1661.05px;top:967.32px;font-size:12.5px;color:#333;transform:scaleX(0.9451);">Defer Layout Update</span>
<div style="left:1856.00px;top:962.00px;width:47.00px;height:22.00px;background:#fdfdfd;border:1px solid #e2e2e2;"></div>
<span class="t" style="left:1859.55px;top:967.32px;font-size:12.5px;color:#a6a6a6;transform:scaleX(0.9497);">Update</span>
<div style="left:456.2px;top:529.7px;width:40.6px;height:40.6px;border-radius:50%;background:radial-gradient(circle at 55% 35%,#f5473f,#ec3b3b 60%,#dc3237);box-shadow:-1px 4px 5px rgba(0,0,0,0.33);"></div>
<span class="t" style="left:467.77px;top:537.12px;font-size:27.5px;color:#ffffff;transform:scaleX(1.1200);-webkit-text-stroke:0.9px #fff;">1</span>
<div style="left:821.3px;top:0.7px;width:40.6px;height:40.6px;border-radius:50%;background:radial-gradient(circle at 55% 35%,#f5473f,#ec3b3b 60%,#dc3237);box-shadow:-1px 4px 5px rgba(0,0,0,0.33);"></div>
<span class="t" style="left:833.36px;top:8.12px;font-size:27.5px;color:#ffffff;transform:scaleX(1.1200);-webkit-text-stroke:0.9px #fff;">2</span>
<div style="left:646.4px;top:107.5px;width:40.6px;height:40.6px;border-radius:50%;background:radial-gradient(circle at 55% 35%,#f5473f,#ec3b3b 60%,#dc3237);box-shadow:-1px 4px 5px rgba(0,0,0,0.33);"></div>
<span class="t" style="left:658.53px;top:114.92px;font-size:27.5px;color:#ffffff;transform:scaleX(1.1200);-webkit-text-stroke:0.9px #fff;">3</span>
<div style="left:1060.0px;top:487.7px;width:40.6px;height:40.6px;border-radius:50%;background:radial-gradient(circle at 55% 35%,#f5473f,#ec3b3b 60%,#dc3237);box-shadow:-1px 4px 5px rgba(0,0,0,0.33);"></div>
<span class="t" style="left:1072.13px;top:495.12px;font-size:27.5px;color:#ffffff;transform:scaleX(1.1200);-webkit-text-stroke:0.9px #fff;">4</span></div></body></html>
